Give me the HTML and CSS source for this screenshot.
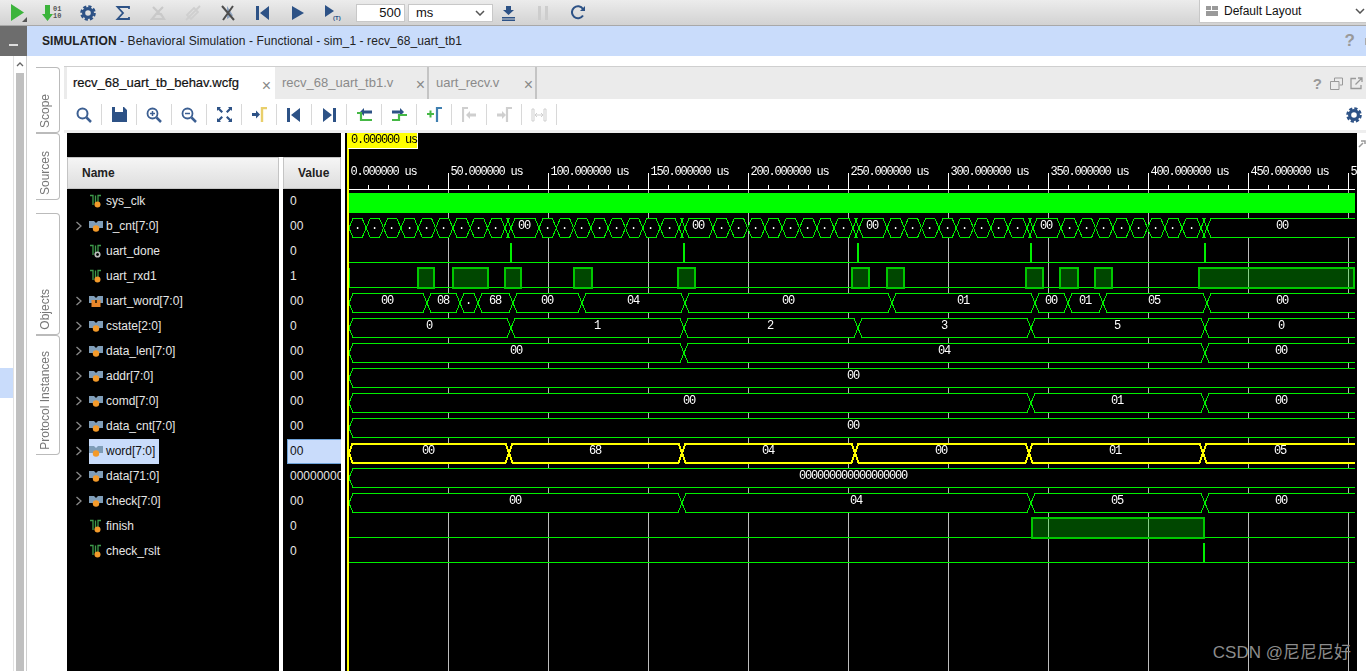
FILE: index.html
```html
<!DOCTYPE html>
<html lang="en">
<head>
	<meta charset="UTF-8">
	<title>SIMULATION - recv_68_uart_tb1</title>
	<link rel="stylesheet" href="styles.css">
</head>
<body>

	<svg class="defs" width="0" height="0">
		<symbol id="i-gear" viewBox="0 0 16 16">
			<circle cx="8" cy="8" r="4.4" fill="none" stroke="#2d5286" stroke-width="3.2"/>
			<circle cx="8" cy="8" r="6.6" fill="none" stroke="#2d5286" stroke-width="2.4" stroke-dasharray="3.2 2"/>
		</symbol>
		<symbol id="i-bit" viewBox="0 0 14 14">
			<path d="M1 1.500h3V11M6.500 11V1.500M9 9V1.500h3" fill="none" stroke="#3d9a4a" stroke-width="1.300"/>
			<circle cx="8.500" cy="10.500" r="3" fill="#f39a2a"/>
		</symbol>
		<symbol id="i-bit-off" viewBox="0 0 14 14">
			<path d="M1 1.500h3V11M6.500 11V1.500M9 9V1.500h3" fill="none" stroke="#3d9a4a" stroke-width="1.300"/>
			<circle cx="8.500" cy="10.500" r="2.300" fill="none" stroke="#bdbdbd" stroke-width="1.600"/>
		</symbol>
		<symbol id="i-bus" viewBox="0 0 14 14">
			<path d="M0 2h5l2 2 2-2h5v7H9L7 7 5 9H0z" fill="#7f9db8"/>
			<circle cx="7" cy="9.500" r="3.200" fill="#f39a2a"/>
		</symbol>
		<symbol id="i-bus-reg" viewBox="0 0 14 14">
			<path d="M0 2h5l2 2 2-2h5v7H9L7 7 5 9H0z" fill="#7f9db8"/>
			<rect x="2.500" y="6" width="9" height="7" fill="#e8862a"/>
			<rect x="6" y="6" width="2" height="3" fill="#4a3010"/>
		</symbol>
		<symbol id="i-chev" viewBox="0 0 8 10">
			<path d="M1.500 1l4.500 4-4.500 4" fill="none" stroke="#8a8a8a" stroke-width="1.300"/>
		</symbol>
	</svg>

	<header class="topbar">
		<div class="tool"><svg width="20" height="20" viewBox="0 0 20 20"><path d="M3 1l13 8.500L3 18z" fill="#3cb43c"/><path d="M19 19h-5l5-5z" fill="#555"/></svg></div>
		<div class="tool"><svg width="22" height="18" viewBox="0 0 22 18"><path d="M3 1h5v9h3l-5.500 7L0 10h3z" fill="#3cb43c"/><text class="tiny-bits" x="11" y="7">01</text><text class="tiny-bits" x="11" y="14">10</text></svg></div>
		<div class="tool"><svg width="16" height="16"><use href="#i-gear"/></svg></div>
		<div class="tool"><svg width="16" height="16" viewBox="0 0 16 16"><path d="M14 4V2H2.500l5.500 6-5.500 6H14v-2" fill="none" stroke="#2d5286" stroke-width="1.800"/></svg></div>
		<div class="tool"><svg width="16" height="16" viewBox="0 0 16 16"><path d="M3 2l8 8M13 2L6 9M2 14h12l-3-5H6z" fill="none" stroke="#c9c9c9" stroke-width="2.200"/></svg></div>
		<div class="tool"><svg width="16" height="16" viewBox="0 0 16 16"><path d="M2 10l7-7 4 4-7 7zM1 15L15 1" fill="none" stroke="#cfcfcf" stroke-width="1.800"/></svg></div>
		<div class="tool"><svg width="16" height="18" viewBox="0 0 16 18"><path d="M7 2v13l6-3.500z" fill="#8ea3bf"/><path d="M2 2l12 14M13 2L3 16" fill="none" stroke="#4d4d4d" stroke-width="2"/></svg></div>
		<div class="tool"><svg width="14" height="14" viewBox="0 0 14 14"><path d="M0 0h3v14H0zM13 0v14L4 7z" fill="#2d5286"/></svg></div>
		<div class="tool"><svg width="14" height="14" viewBox="0 0 14 14"><path d="M1 0l12 7-12 7z" fill="#2d5286"/></svg></div>
		<div class="tool"><svg width="18" height="18" viewBox="0 0 18 18"><path d="M1 1l9 6-9 6z" fill="#2d5286"/><text class="tiny-t" x="9" y="16">(T)</text></svg></div>
		<input class="run-time" type="text" value="500">
		<div class="unit-box">ms<svg width="10" height="6" viewBox="0 0 10 6"><path d="M1 1l4 4 4-4" fill="none" stroke="#555" stroke-width="1.500"/></svg></div>
		<div class="tool tool-sm"><svg width="15" height="16" viewBox="0 0 15 16"><path d="M5 1h5v4h3L7.500 10 2 5h3zM1 12h13v1.500H1zM1 14.500h13V16H1z" fill="#2d5286"/></svg></div>
		<div class="tool tool-sm gap"><svg width="10" height="14" viewBox="0 0 10 14"><path d="M0 0h3v14H0zM7 0h3v14H7z" fill="#cdcdcd"/></svg></div>
		<div class="tool tool-sm gap"><svg width="15" height="15" viewBox="0 0 15 15"><path d="M12 10.500A6 6 0 1 1 12 4" fill="none" stroke="#2d5286" stroke-width="2"/><path d="M14 1v5H9z" fill="#2d5286"/></svg></div>
		<div class="layout-box">
			<svg width="12" height="10" viewBox="0 0 12 10"><path d="M0 0h5v4H0zM6 0h6v4H6zM0 5h12v5H0z" fill="#9a9a9a"/></svg>
			Default Layout
			<svg class="layout-chev" width="10" height="6" viewBox="0 0 10 6"><path d="M1 1l4 4 4-4" fill="none" stroke="#555" stroke-width="1.500"/></svg>
		</div>
	</header>

	<div class="banner-row">
		<div class="banner-dark"><span class="minus"></span></div>
		<div class="banner"><b>SIMULATION</b>&nbsp;- Behavioral Simulation - Functional - sim_1 - recv_68_uart_tb1<span class="banner-help">?</span><span class="banner-cut"></span></div>
	</div>

	<main class="main">
		<div class="nav">
			<div class="nav-sel"></div>
			<div class="nav-scroll">
				<svg width="8" height="6" viewBox="0 0 8 6"><path d="M1 5l3-3 3 3" fill="none" stroke="#666" stroke-width="1.300"/></svg>
				<div class="nav-thumb"></div>
			</div>
		</div>

		<div class="side-tabs">
			<div class="side-tab tab-scope"><span>Scope</span></div>
			<div class="side-tab tab-sources"><span>Sources</span></div>
			<div class="side-tab tab-objects"><span>Objects</span></div>
			<div class="side-tab tab-protocol"><span>Protocol Instances</span></div>
		</div>

		<section class="editor">
			<div class="tab-strip">
				<div class="tab active" style="width:208px">recv_68_uart_tb_behav.wcfg<span class="close">×</span></div>
				<div class="tab" style="width:154px">recv_68_uart_tb1.v<span class="close">×</span></div>
				<div class="tab" style="width:108px">uart_recv.v<span class="close">×</span></div>
				<div class="strip-icons">
					<span class="strip-help">?</span>
					<svg width="13" height="13" viewBox="0 0 13 13"><path d="M4.500 4V1h8v7h-3M.5 4.500h8.500v8H.5z" fill="none" stroke="#999"/></svg>
					<svg width="13" height="13" viewBox="0 0 13 13"><path d="M6 1.500H1v10h10V8M5.500 7.500L12 1M8 1h4v4" fill="none" stroke="#999" stroke-width="1.300"/></svg>
				</div>
			</div>

			<div class="wave-tools">
				<div class="wtool"><svg width="16" height="16" viewBox="0 0 16 16"><circle cx="6.500" cy="6.500" r="5" fill="none" stroke="#3c5f92" stroke-width="2"/><path d="M10.500 10.500L15 15" stroke="#3c5f92" stroke-width="2.500"/></svg></div>
				<div class="wtool"><svg width="15" height="15" viewBox="0 0 15 15"><path d="M0 0h3v5h8V0h1l3 3v12H0z" fill="#2d5286"/></svg></div>
				<div class="wtool"><svg width="16" height="16" viewBox="0 0 16 16"><circle cx="6.500" cy="6.500" r="5" fill="none" stroke="#3c5f92" stroke-width="1.800"/><path d="M10.500 10.500L15 15" stroke="#3c5f92" stroke-width="2.500"/><path d="M4 6.500h5M6.500 4v5" stroke="#3c5f92" stroke-width="1.500"/></svg></div>
				<div class="wtool"><svg width="16" height="16" viewBox="0 0 16 16"><circle cx="6.500" cy="6.500" r="5" fill="none" stroke="#3c5f92" stroke-width="1.800"/><path d="M10.500 10.500L15 15" stroke="#3c5f92" stroke-width="2.500"/><path d="M4 6.500h5" stroke="#3c5f92" stroke-width="1.500"/></svg></div>
				<div class="wtool"><svg width="15" height="15" viewBox="0 0 15 15"><path d="M0 0h4L2.800 1.200 6 4.500 4.500 6 1.200 2.800 0 4zM15 0v4l-1.200-1.200L10.500 6 9 4.500l3.200-3.300L11 0zM0 15v-4l1.200 1.200L4.500 9 6 10.500l-3.200 3.300L4 15zM15 15h-4l1.200-1.200L9 10.500 10.500 9l3.300 3.200L15 11z" fill="#2d5286"/></svg></div>
				<div class="wtool"><svg width="15" height="15" viewBox="0 0 15 15"><path d="M0 6h4V3.500L8 7.500l-4 4V9H0z" fill="#2d5286"/><path d="M10 15V1h5" fill="none" stroke="#e9cf6b" stroke-width="2.400"/></svg></div>
				<div class="wtool"><svg width="14" height="14" viewBox="0 0 14 14"><path d="M0 0h3v14H0zM13 0v14L4 7z" fill="#2d5286"/></svg></div>
				<div class="wtool"><svg width="14" height="14" viewBox="0 0 14 14"><path d="M11 0h3v14h-3zM1 0v14l9-7z" fill="#2d5286"/></svg></div>
				<div class="wtool"><svg width="15" height="14" viewBox="0 0 15 14"><path d="M7 0v2.500h8v3H7V8L3 4z" fill="#2d5286"/><path d="M0 5h4v7h11" fill="none" stroke="#45b845" stroke-width="2.200"/></svg></div>
				<div class="wtool"><svg width="15" height="14" viewBox="0 0 15 14"><path d="M8 0v2.500H0v3h8V8l4-4z" fill="#2d5286"/><path d="M0 12h7V7h8" fill="none" stroke="#45b845" stroke-width="2.200"/></svg></div>
				<div class="wtool"><svg width="15" height="15" viewBox="0 0 15 15"><path d="M0 7h7M3.500 3.500v7" stroke="#45b845" stroke-width="2"/><path d="M10 15V1h5" fill="none" stroke="#3f7fb0" stroke-width="2.200"/></svg></div>
				<div class="wtool"><svg width="15" height="15" viewBox="0 0 15 15"><path d="M1 15V1h5" fill="none" stroke="#cfcfcf" stroke-width="2.200"/><path d="M4 8l4-4v2.500h6v3H8V12z" fill="#cfcfcf"/></svg></div>
				<div class="wtool"><svg width="15" height="15" viewBox="0 0 15 15"><path d="M0 6.500h5V4l4 4-4 4V9.500H0z" fill="#cfcfcf"/><path d="M10 15V1h5" fill="none" stroke="#cfcfcf" stroke-width="2.200"/></svg></div>
				<div class="wtool"><svg width="16" height="14" viewBox="0 0 16 14"><path d="M1 1h2v12H1zM13 1h2v12h-2z" fill="none" stroke="#cfcfcf"/><path d="M4 7h8M4 7l2-2M4 7l2 2M12 7l-2-2M12 7l-2 2" fill="none" stroke="#cfcfcf"/></svg></div>
				<div class="wtool-last"><svg width="16" height="16"><use href="#i-gear"/></svg></div>
			</div>
			<div class="tools-rule"></div>

			<div class="wave-view">
				<div class="signals">
					<div class="signals-top"></div>
					<div class="names">
						<div class="col-head name-head">Name</div>
						<div class="sig"><span class="chev"></span><span class="sig-label"><svg width="14" height="14"><use href="#i-bit"/></svg>sys_clk</span></div>
						<div class="sig"><span class="chev"><svg width="8" height="10"><use href="#i-chev"/></svg></span><span class="sig-label"><svg width="14" height="14"><use href="#i-bus"/></svg>b_cnt[7:0]</span></div>
						<div class="sig"><span class="chev"></span><span class="sig-label"><svg width="14" height="14"><use href="#i-bit-off"/></svg>uart_done</span></div>
						<div class="sig"><span class="chev"></span><span class="sig-label"><svg width="14" height="14"><use href="#i-bit"/></svg>uart_rxd1</span></div>
						<div class="sig"><span class="chev"><svg width="8" height="10"><use href="#i-chev"/></svg></span><span class="sig-label"><svg width="14" height="14"><use href="#i-bus-reg"/></svg>uart_word[7:0]</span></div>
						<div class="sig"><span class="chev"><svg width="8" height="10"><use href="#i-chev"/></svg></span><span class="sig-label"><svg width="14" height="14"><use href="#i-bus"/></svg>cstate[2:0]</span></div>
						<div class="sig"><span class="chev"><svg width="8" height="10"><use href="#i-chev"/></svg></span><span class="sig-label"><svg width="14" height="14"><use href="#i-bus"/></svg>data_len[7:0]</span></div>
						<div class="sig"><span class="chev"><svg width="8" height="10"><use href="#i-chev"/></svg></span><span class="sig-label"><svg width="14" height="14"><use href="#i-bus"/></svg>addr[7:0]</span></div>
						<div class="sig"><span class="chev"><svg width="8" height="10"><use href="#i-chev"/></svg></span><span class="sig-label"><svg width="14" height="14"><use href="#i-bus"/></svg>comd[7:0]</span></div>
						<div class="sig"><span class="chev"><svg width="8" height="10"><use href="#i-chev"/></svg></span><span class="sig-label"><svg width="14" height="14"><use href="#i-bus"/></svg>data_cnt[7:0]</span></div>
						<div class="sig"><span class="chev"><svg width="8" height="10"><use href="#i-chev"/></svg></span><span class="sig-label selected"><svg width="14" height="14"><use href="#i-bus"/></svg>word[7:0]</span></div>
						<div class="sig"><span class="chev"><svg width="8" height="10"><use href="#i-chev"/></svg></span><span class="sig-label"><svg width="14" height="14"><use href="#i-bus"/></svg>data[71:0]</span></div>
						<div class="sig"><span class="chev"><svg width="8" height="10"><use href="#i-chev"/></svg></span><span class="sig-label"><svg width="14" height="14"><use href="#i-bus"/></svg>check[7:0]</span></div>
						<div class="sig"><span class="chev"></span><span class="sig-label"><svg width="14" height="14"><use href="#i-bit"/></svg>finish</span></div>
						<div class="sig"><span class="chev"></span><span class="sig-label"><svg width="14" height="14"><use href="#i-bit"/></svg>check_rslt</span></div>
					</div>
					<div class="values">
						<div class="col-head value-head">Value</div>
						<div class="val">0</div>
						<div class="val">00</div>
						<div class="val">0</div>
						<div class="val">1</div>
						<div class="val">00</div>
						<div class="val">0</div>
						<div class="val">00</div>
						<div class="val">00</div>
						<div class="val">00</div>
						<div class="val">00</div>
						<div class="val val-selected">00</div>
						<div class="val">000000000000000000</div>
						<div class="val">00</div>
						<div class="val">0</div>
						<div class="val">0</div>
					</div>
				</div>
				<svg id="wave" class="wave" width="1012" height="538" viewBox="345 133 1012 538"></svg>
				<div class="wave-side"><svg width="8" height="8" viewBox="0 0 8 8"><path d="M1 7l4-4M3 1h4v3" fill="none" stroke="#999" stroke-width="1.500"/></svg></div>
			</div>
		</section>
	</main>

	<div class="watermark">CSDN @尼尼尼好</div>

	<script src="script.js"></script>
</body>
</html>
```

FILE: styles.css
```css
* {
	box-sizing: border-box;
}

html,
body {
	margin: 0;
	height: 671px;
	overflow: hidden;
}

body {
	position: relative;
	font-family: "Liberation Sans", Arial, sans-serif;
	font-size: 12px;
	background-color: #fff;
	color: #222;
}

.defs {
	display: block;
	height: 0;
}

/* top toolbar */
.topbar {
	display: flex;
	align-items: center;
	height: 26px;
	background: linear-gradient(#ececec, #d2d2d2);
	border-bottom: 1px solid #a8a8a8;
}

.tool {
	display: flex;
	align-items: center;
	justify-content: center;
	width: 35px;
	height: 25px;
	flex: none;
}

.tool-sm {
	width: 30px;
}

.tool-sm.gap {
	margin-left: 5px;
}

.tiny-bits {
	font-family: "Liberation Mono", monospace;
	font-size: 7px;
	font-weight: bold;
	fill: #555;
}

.tiny-t {
	font-family: "Liberation Sans", sans-serif;
	font-size: 6px;
	font-weight: bold;
	fill: #2d5286;
}

.run-time {
	width: 49px;
	height: 18px;
	margin-left: 6px;
	padding: 0 3px;
	border: 1px solid #c8c8c8;
	font-family: inherit;
	font-size: 13px;
	text-align: right;
	color: #111;
}

.unit-box {
	display: flex;
	align-items: center;
	justify-content: space-between;
	width: 85px;
	height: 18px;
	margin-left: 3px;
	padding: 0 7px;
	background-color: #fff;
	border: 1px solid #c8c8c8;
	font-size: 13px;
	color: #111;
}

.layout-box {
	display: flex;
	align-items: center;
	gap: 6px;
	width: 167px;
	height: 23px;
	margin-left: auto;
	margin-top: -2px;
	padding-left: 6px;
	background-color: #fff;
	border-left: 1px solid #c8c8c8;
	border-bottom: 1px solid #c8c8c8;
	color: #111;
}

.layout-chev {
	margin-left: auto;
	margin-right: 1px;
}

/* banner */
.banner-row {
	display: flex;
	height: 30px;
}

.banner-dark {
	display: flex;
	align-items: center;
	justify-content: center;
	width: 27px;
	background-color: #6d6d6d;
}

.minus {
	display: block;
	width: 9px;
	height: 2px;
	margin-top: 8px;
	background-color: #ddd;
}

.banner {
	display: flex;
	align-items: center;
	flex: 1;
	padding-left: 15px;
	background-color: #c9dcfb;
	letter-spacing: 0.09px;
}

.banner-help {
	margin-left: auto;
	margin-right: 10px;
	font-size: 17px;
	font-weight: bold;
	color: #999;
}

.banner-cut {
	width: 1px;
	height: 7px;
	background-color: #aaa;
}

/* left strip */
.main {
	display: flex;
	height: 615px;
}

.nav {
	display: flex;
	width: 27px;
	border-right: 1px solid #cfcfcf;
}

.nav-sel {
	width: 13px;
	height: 30px;
	margin-top: 312px;
	background-color: #c9dcfb;
}

.nav-scroll {
	display: flex;
	flex-direction: column;
	align-items: center;
	width: 13px;
	padding-top: 5px;
	border-left: 1px solid #e2e2e2;
}

.nav-thumb {
	width: 8px;
	flex: 1;
	margin-top: 6px;
	background-color: #c0c0c0;
}

.side-tabs {
	display: flex;
	flex-direction: column;
	width: 37px;
	padding: 11px 0 0 9px;
}

.side-tab {
	display: flex;
	justify-content: center;
	align-items: flex-end;
	width: 24px;
	padding-bottom: 4px;
	padding-right: 6px;
	border: 1px solid #bbb;
	border-left: none;
	border-radius: 0 4px 4px 0;
	color: #777;
}

.side-tab span {
	writing-mode: vertical-rl;
	transform: rotate(180deg);
}

.tab-scope {
	height: 66px;
}

.tab-sources {
	height: 67px;
}

.tab-objects {
	height: 122px;
	margin-top: 13px;
}

.tab-protocol {
	height: 120px;
}

/* editor */
.editor {
	display: flex;
	flex-direction: column;
	flex: 1;
	min-width: 0;
	margin-top: 10px;
	border-top: 1px solid #cfcfcf;
}

.tab-strip {
	display: flex;
	height: 32px;
	padding-left: 3px;
	background-color: #ebebeb;
}

.tab {
	display: flex;
	align-items: center;
	position: relative;
	padding: 0 0 2px 7px;
	font-size: 13px;
	color: #8a8a8a;
	border-right: 2px solid #c4c4c4;
}

.tab.active {
	padding-left: 6px;
	background-color: #fff;
	color: #111;
	border-right: none;
	-webkit-text-stroke: 0.2px #111;
}

.close {
	position: absolute;
	right: 2px;
	top: 9px;
	font-size: 16px;
	font-weight: normal;
	color: #888;
	-webkit-text-stroke: 0;
}

.tab.active .close {
	right: 4px;
	top: 10px;
}

.strip-icons {
	display: flex;
	align-items: center;
	gap: 7px;
	margin-left: auto;
	padding-right: 3px;
}

.strip-help {
	margin-right: 1px;
	font-size: 15px;
	font-weight: bold;
	color: #999;
}

.wave-tools {
	display: flex;
	height: 31px;
	padding-left: 2.5px;
	background-color: #fff;
}

.wtool {
	display: flex;
	align-items: center;
	justify-content: center;
	width: 35px;
	position: relative;
}

.wtool::after {
	content: "";
	position: absolute;
	right: 0;
	top: 5px;
	bottom: 5px;
	width: 1px;
	background-color: #d8d8d8;
}

.wtool-last {
	display: flex;
	align-items: center;
	margin-left: auto;
	padding-right: 4px;
}

.tools-rule {
	height: 3px;
	background-color: #eee;
}

.wave-view {
	display: flex;
	height: 538px;
	padding-left: 3px;
}

/* signal list */
.signals {
	display: grid;
	grid-template-columns: 212px 58px;
	grid-template-rows: 24px 1fr;
	column-gap: 4px;
	width: 274px;
	height: 538px;
	flex: none;
}

.signals-top {
	grid-column: 1 / 3;
	background-color: #000;
}

.names,
.values {
	background-color: #000;
	color: #e6e6e6;
}

.col-head {
	display: flex;
	align-items: center;
	height: 32px;
	background: linear-gradient(#f5f5f5, #dedede);
	border: 1px solid #c4c4c4;
	font-weight: bold;
	color: #222;
}

.name-head {
	padding-left: 14px;
}

.value-head {
	padding-left: 14px;
}

.sig {
	display: flex;
	align-items: center;
	height: 25px;
	padding-left: 8px;
}

.chev {
	display: flex;
	width: 14px;
	margin-bottom: 2px;
}

.sig-label {
	display: flex;
	align-items: center;
	gap: 3px;
	height: 25px;
	padding: 0 4px 2px 0;
	white-space: nowrap;
}

.sig-label.selected {
	background-color: #c9dcfb;
	color: #111;
}

.val {
	display: flex;
	align-items: center;
	height: 25px;
	padding: 0 0 2px 7px;
	overflow: hidden;
	white-space: nowrap;
}

.val-selected {
	margin-left: 4px;
	padding-left: 2px;
	background-color: #c9dcfb;
	border: 1px solid #6ea2d8;
	border-right: none;
	color: #111;
}

/* waveform canvas */
.wave {
	display: block;
	flex: none;
	margin-left: 4px;
	background-color: #000;
	shape-rendering: crispEdges;
}

.wave text {
	font-family: "Liberation Mono", monospace;
	font-size: 12px;
	letter-spacing: -1.2px;
	fill: #fff;
	white-space: pre;
	filter: grayscale(1);
}

.wave .cursor-time {
	fill: #000;
}

.wave-side {
	flex: 1;
	padding-top: 4px;
	text-align: right;
}

.watermark {
	position: absolute;
	right: 15px;
	bottom: 8px;
	font-family: "Liberation Sans", "Noto Sans CJK SC", sans-serif;
	font-size: 17px;
	color: #8c8c8c;
}
```

FILE: script.js
```js
// Draws the waveform canvas. Coordinates in the viewBox are page pixels.
const svg = document.getElementById('wave');
const NS = 'http://www.w3.org/2000/svg';
const LEFT = 349;
const RIGHT = 1355;
const GREEN = '#00f000';

function add(tag, attrs, text) {
	const el = document.createElementNS(NS, tag);
	for (const k in attrs) el.setAttribute(k, attrs[k]);
	if (text !== undefined) el.textContent = text;
	svg.appendChild(el);
	return el;
}

function line(x1, y1, x2, y2, color, w) {
	add('line', { x1, y1, x2, y2, stroke: color, 'stroke-width': w || 1 });
}

function rowTop(i) {
	return 193 + 25 * i;
}

// ruler and grid
for (let k = 0; k <= 10; k++) {
	const x = 348 + 100 * k;
	if (k > 0) {
		line(x + 0.5, 189, x + 0.5, 671, '#bdbdbd');
		line(x + 0.5, 173, x + 0.5, 189, '#fff');
	}
	for (let m = 1; m < 5 && k < 10; m++) {
		const mx = x + 20 * m + 0.5;
		line(mx, 185, mx, 189, '#fff');
	}
	const label = k === 10 ? '5' : (50 * k) + '.000000 us';
	add('text', { x: x + 2.5, y: 175 }, label);
}
line(349, 189.5, RIGHT, 189.5, '#fff');

// single bit rows
function bitRow(i, highs) {
	const t = rowTop(i);
	const b = t + 19;
	line(LEFT, b + 0.5, RIGHT, b + 0.5, GREEN);
	highs.forEach(([a, z]) => {
		add('rect', { x: a, y: t, width: z - a, height: 19.5, fill: 'rgba(0,255,0,0.28)', stroke: '#00c800', 'stroke-width': 2 });
	});
}

function pulseRow(i, xs) {
	const t = rowTop(i);
	const b = t + 19;
	line(LEFT, b + 0.5, RIGHT, b + 0.5, GREEN);
	xs.forEach((x) => add('rect', { x, y: t, width: 2, height: 19, fill: '#00f000' }));
}

// bus rows: xs are the crossing points, labels one per segment
function busRow(i, xs, labels, color, sw, w) {
	const t = rowTop(i) + 0.5;
	const b = t + 19;
	const mid = t + 9.5;
	const stroke = color || GREEN;
	const half = w || 4;
	const pts = [LEFT].concat(xs, [RIGHT + half]);
	for (let s = 0; s < pts.length - 1; s++) {
		const a = pts[s];
		const z = pts[s + 1];
		const last = s === pts.length - 2;
		const ax = a + half;
		const zx = last ? RIGHT : z - half;
		const zEnd = last ? RIGHT : z;
		add('polygon', { points: `${a},${mid} ${ax},${t} ${zx},${t} ${zEnd},${mid} ${zx},${b} ${ax},${b}`, fill: '#000' });
		const d = `M${a} ${mid}L${ax} ${t}L${zx} ${t}` + (last ? '' : `L${z} ${mid}`) +
			`M${a} ${mid}L${ax} ${b}L${zx} ${b}` + (last ? '' : `L${z} ${mid}`);
		add('path', { d, fill: 'none', stroke, 'stroke-width': sw || 1 });
		if (labels[s]) {
			add('text', { x: Math.round((a + z) / 2) - 1, y: t + 10.5, 'text-anchor': 'middle' }, labels[s]);
		}
	}
}

add('rect', { x: LEFT, y: 193, width: RIGHT - LEFT, height: 20, fill: '#00ff00' });

// b_cnt: repeated group of eight short values, a glitch and a 00
const cntX = [];
const cntL = [];
for (let j = 8; j >= 0; j--) {
	cntX.push(505 - 17.35 * j);
	cntL.push('.');
}
cntL.push('');
for (let g = 0; g < 5; g++) {
	const base = 511 + 174 * g;
	cntX.push(base);
	cntL.push('00');
	if (g === 4) break;
	for (let j = 0; j < 8; j++) {
		cntX.push(base + 28 + 17.3 * j);
		cntL.push('.');
	}
	cntX.push(base + 168);
	cntL.push('');
}
busRow(1, cntX, cntL);

pulseRow(2, [510, 683, 857, 1030, 1204]);
bitRow(3, [[418, 434], [453, 488], [505, 521], [574, 592], [678, 695], [852, 869], [887, 904], [1026, 1043], [1060, 1078], [1095, 1112], [1199, 1354]]);
add('rect', { x: 349, y: 268, width: 1, height: 19, fill: GREEN });

busRow(4, [427, 460, 478, 513, 582, 685, 892, 1035, 1068, 1103, 1207],
	['00', '08', '.', '68', '00', '04', '00', '01', '00', '01', '05', '00']);
busRow(5, [511, 684, 858, 1031, 1205], ['0', '1', '2', '3', '5', '0']);
busRow(6, [684, 1205], ['00', '04', '00']);
busRow(7, [], ['00']);
busRow(8, [1031, 1205], ['00', '01', '00']);
busRow(9, [], ['00']);
busRow(10, [509, 682, 855, 1029, 1203], ['00', '68', '04', '00', '01', '05'], '#ffff00', 2, 3.5);
busRow(11, [], ['000000000000000000']);
busRow(12, [682, 1031, 1205], ['00', '04', '05', '00']);

bitRow(13, [[1032, 1204]]);
pulseRow(14, [1203]);

// cursor and its time box
add('rect', { x: 347, y: 133, width: 2, height: 538, fill: '#ffff00' });
add('rect', { x: 348, y: 133, width: 70, height: 16, fill: '#fff' });
add('rect', { x: 348, y: 133, width: 69, height: 15, fill: '#ffff00' });
add('text', { x: 351, y: 143, class: 'cursor-time' }, '0.000000 us');
```
